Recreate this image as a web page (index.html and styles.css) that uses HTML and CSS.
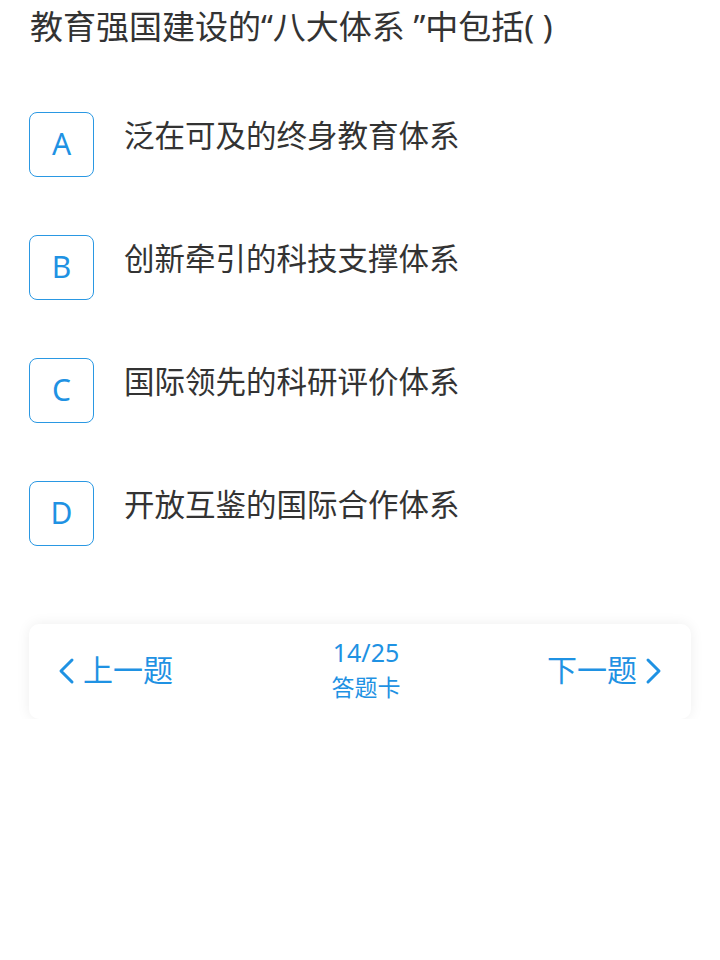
FILE: index.html
```html
<!DOCTYPE html>
<html lang="zh-CN">
<head>
    <meta charset="UTF-8">
    <meta name="viewport" content="width=device-width, initial-scale=1.0">
    <title>答题</title>
    <link rel="stylesheet" href="styles.css">
</head>
<body>

    <div class="page">
        <h2 class="question">教育强国建设的“八大体系 ”中包括( )</h2>

        <div class="options">
            <div class="option">
                <span class="letter">A</span>
                <span class="text">泛在可及的终身教育体系</span>
            </div>
            <div class="option">
                <span class="letter">B</span>
                <span class="text">创新牵引的科技支撑体系</span>
            </div>
            <div class="option">
                <span class="letter">C</span>
                <span class="text">国际领先的科研评价体系</span>
            </div>
            <div class="option">
                <span class="letter">D</span>
                <span class="text">开放互鉴的国际合作体系</span>
            </div>
        </div>

        <div class="nav">
            <a class="nav-btn">
                <svg class="chev" width="18" height="28" viewBox="0 0 18 28"><path d="M15 3 L4 14 L15 25" fill="none" stroke="currentColor" stroke-width="3" stroke-linecap="round" stroke-linejoin="round"/></svg>
                上一题
            </a>
            <div class="progress">
                <div class="count">14/25</div>
                <div class="card">答题卡</div>
            </div>
            <a class="nav-btn">
                下一题
                <svg class="chev" width="18" height="28" viewBox="0 0 18 28"><path d="M3 3 L14 14 L3 25" fill="none" stroke="currentColor" stroke-width="3" stroke-linecap="round" stroke-linejoin="round"/></svg>
            </a>
        </div>
    </div>

</body>
</html>
```

FILE: styles.css
```css
body {
    font-family: "Noto Sans CJK SC", "Noto Sans", sans-serif;
    background-color: #fff;
    color: #333;
    margin: 0;
    padding: 0;
}
.page {
    padding: 0 29px;
}
.question {
    margin: 0;
    padding: 5px 0 0 1px;
    font-family: "Noto Sans", "Noto Sans CJK SC", sans-serif;
    font-size: 33px;
    font-weight: normal;
    line-height: 44px;
    color: #333;
}
.options {
    margin-top: 63px;
    display: flex;
    flex-direction: column;
    gap: 58px;
}
.option {
    display: flex;
    align-items: flex-start;
}
.letter {
    width: 63px;
    height: 63px;
    border: 1px solid #2a98e3;
    border-radius: 8px;
    display: flex;
    align-items: center;
    justify-content: center;
    font-family: "Noto Sans", sans-serif;
    font-size: 30px;
    line-height: 1;
    padding-bottom: 2px;
    box-sizing: content-box;
    height: 61px;
    color: #1f92e3;
    flex-shrink: 0;
}
.text {
    margin-left: 30px;
    padding-top: 2px;
    font-size: 30.5px;
    line-height: 40px;
    color: #333;
}
.nav {
    margin-top: 78px;
    height: 95px;
    background-color: #fff;
    border-radius: 10px;
    box-shadow: 0 0 14px rgba(0, 0, 0, 0.07);
    display: flex;
    align-items: center;
    justify-content: space-between;
    padding: 0 28px;
    color: #1f92e3;
}
.nav-btn {
    display: flex;
    align-items: center;
    gap: 8px;
    font-size: 30px;
    line-height: 40px;
    padding-bottom: 8px;
}
.chev {
    display: block;
    margin-top: 6px;
}
.progress {
    text-align: center;
    padding-left: 12px;
    padding-bottom: 6px;
}
.count {
    font-family: "Noto Sans", sans-serif;
    font-size: 25px;
    line-height: 34px;
}
.card {
    font-size: 23px;
    line-height: 34px;
}
```
